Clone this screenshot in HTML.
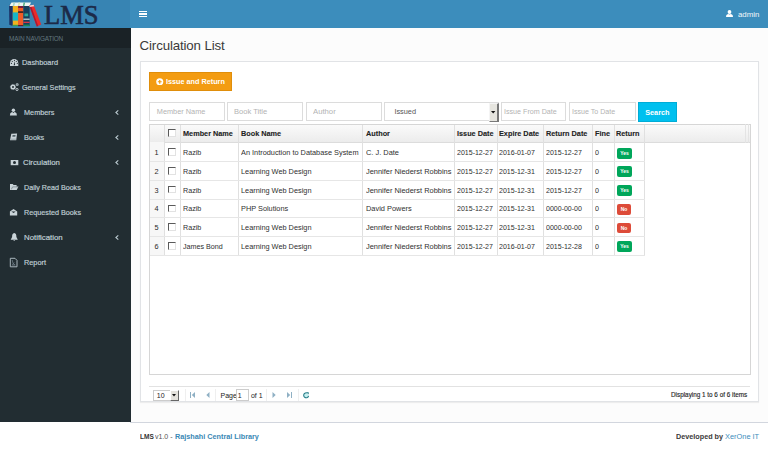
<!DOCTYPE html><html><head><meta charset="utf-8"><style>
*{margin:0;padding:0;box-sizing:border-box}
html,body{width:768px;height:451px;overflow:hidden;background:#fcfcfc;font-family:"Liberation Sans", sans-serif;}
.ab{position:absolute;white-space:nowrap}
.side{color:#bfccd2;font-size:7.3px;-webkit-text-stroke:0.2px #bfccd2}
.cell{position:absolute;white-space:nowrap;font-size:7.3px;color:#333;-webkit-text-stroke:0.15px #333}
.bt{font-size:7.95px;transform-origin:0 50%;-webkit-text-stroke:0;color:#2f2f2f}
.hd{font-weight:bold;color:#222}
.ph{color:#b3b3b3;font-size:7.35px}
</style></head><body>
<div class="ab" style="left:0;top:0;width:130.5px;height:28px;background:#3784b3"></div>
<div class="ab" style="left:130px;top:0;width:638px;height:28px;background:#3c8dbc"></div>
<svg class="ab" style="left:0;top:0" width="45" height="28" viewBox="0 0 45 28">
<polygon points="9.1,5 12.8,4 12.8,26 9.3,24.8" fill="#1b3468"/>
<rect x="12.8" y="6" width="5.3" height="20" fill="#f2b21e"/>
<rect x="12.8" y="12.4" width="5.3" height="8.2" fill="#17b6c6"/>
<rect x="12.8" y="24.8" width="5.3" height="1.4" fill="#3aa050"/>
<rect x="18.1" y="6" width="5.3" height="20" fill="#f25c26"/>
<rect x="18.1" y="6" width="5.3" height="2" fill="#7a1f40"/>
<rect x="18.1" y="11.2" width="5.3" height="1.8" fill="#4a2a20"/>
<rect x="18.1" y="25" width="5.3" height="1.2" fill="#5a1a30"/>
<rect x="23.4" y="6" width="6.2" height="20" fill="#163f5c"/>
<rect x="24.4" y="13.5" width="3.8" height="2.8" fill="#2ea896"/>
<rect x="23.4" y="18.6" width="6.2" height="1.2" fill="#d4dcdc"/>
<rect x="23.4" y="21.7" width="6.2" height="1.3" fill="#d83548"/>
<rect x="23.4" y="24.6" width="6.2" height="1.6" fill="#1a8a50"/>
<polygon points="9.3,6 11.5,2.4 31,2.4 29.5,6" fill="#eef6f2"/>
<polygon points="13.5,2.4 15.2,2.4 14.2,6 12.6,6" fill="#a8d8c8"/>
<polygon points="18.5,2.4 20.2,2.4 19.3,6 17.8,6" fill="#d8e8b8"/>
<polygon points="23.5,2.4 25.2,2.4 24.4,6 22.9,6" fill="#58b088"/>
<polygon points="29.2,5.6 33.6,4.8 41.2,24.4 36.8,26.6" fill="#ea2a2a"/>
<polygon points="29.2,5.6 30.8,5.3 38.2,26 36.8,26.6" fill="#a81a34"/>
<polygon points="29.2,5.6 33.6,4.8 34.2,6.2 29.8,7" fill="#f2d8d8"/>
</svg>
<div class="ab" style="left:44px;top:1px;font:26.5px/28px 'Liberation Serif',serif;color:#1c2a48;-webkit-text-stroke:0.6px #1c2a48">LMS</div>
<div class="ab" style="left:139px;top:11px;width:8px;height:1.4px;background:#fff"></div>
<div class="ab" style="left:139px;top:13.3px;width:8px;height:1.4px;background:#fff"></div>
<div class="ab" style="left:139px;top:15.6px;width:8px;height:1.4px;background:#fff"></div>
<svg class="ab" style="left:726px;top:10.4px" width="7" height="7" viewBox="0 0 7 7">
<circle cx="3.5" cy="2.0" r="1.9" fill="#fff"/><path d="M0,7 L0.3,5.3 Q0.8,4.0 2.2,3.9 L3.5,4.6 L4.8,3.9 Q6.2,4.0 6.7,5.3 L7,7Z" fill="#fff"/></svg>
<div class="ab" style="left:737.8px;top:10.3px;font-size:7.6px;line-height:10px;color:#f4f8fb;transform:scaleX(1.03);transform-origin:0 50%">admin</div>
<div class="ab" style="left:0;top:28px;width:130.5px;height:394px;background:#222d32"></div>
<div class="ab" style="left:0;top:28px;width:130.5px;height:20px;background:#1a2226"></div>
<div class="ab" style="left:9px;top:34.8px;font-size:6.45px;letter-spacing:-0.17px;line-height:8px;color:#62777f">MAIN NAVIGATION</div>
<div class="ab side" style="left:21.7px;top:57.699999999999996px;line-height:10px;font-size:7.8px;transform:scaleX(0.943);transform-origin:0 50%">Dashboard</div>
<div class="ab side" style="left:22.2px;top:82.7px;line-height:10px;font-size:7.8px;transform:scaleX(0.923);transform-origin:0 50%">General Settings</div>
<div class="ab side" style="left:23.7px;top:107.7px;line-height:10px;font-size:7.8px;transform:scaleX(0.935);transform-origin:0 50%">Members</div>
<svg class="ab" style="left:115px;top:109.8px" width="4" height="5" viewBox="0 0 4 5"><path d="M3.3,0.4 L0.9,2.5 L3.3,4.6" stroke="#b8c7ce" stroke-width="1.1" fill="none"/></svg>
<div class="ab side" style="left:23.7px;top:132.8px;line-height:10px;font-size:7.8px;transform:scaleX(0.932);transform-origin:0 50%">Books</div>
<svg class="ab" style="left:115px;top:134.9px" width="4" height="5" viewBox="0 0 4 5"><path d="M3.3,0.4 L0.9,2.5 L3.3,4.6" stroke="#b8c7ce" stroke-width="1.1" fill="none"/></svg>
<div class="ab side" style="left:23.2px;top:157.9px;line-height:10px;font-size:7.8px;transform:scaleX(1.001);transform-origin:0 50%">Circulation</div>
<svg class="ab" style="left:115px;top:160.0px" width="4" height="5" viewBox="0 0 4 5"><path d="M3.3,0.4 L0.9,2.5 L3.3,4.6" stroke="#b8c7ce" stroke-width="1.1" fill="none"/></svg>
<div class="ab side" style="left:23.7px;top:182.8px;line-height:10px;font-size:7.8px;transform:scaleX(0.916);transform-origin:0 50%">Daily Read Books</div>
<div class="ab side" style="left:23.7px;top:208.0px;line-height:10px;font-size:7.8px;transform:scaleX(0.927);transform-origin:0 50%">Requested Books</div>
<div class="ab side" style="left:23.7px;top:232.8px;line-height:10px;font-size:7.8px;transform:scaleX(1.003);transform-origin:0 50%">Notification</div>
<svg class="ab" style="left:115px;top:234.9px" width="4" height="5" viewBox="0 0 4 5"><path d="M3.3,0.4 L0.9,2.5 L3.3,4.6" stroke="#b8c7ce" stroke-width="1.1" fill="none"/></svg>
<div class="ab side" style="left:23.7px;top:258.0px;line-height:10px;font-size:7.8px;transform:scaleX(0.939);transform-origin:0 50%">Report</div>
<svg class="ab" style="left:0;top:0" width="130" height="451" viewBox="0 0 130 451">
<path d="M10,65.9 L10,63.2 A4.15,4.2 0 0 1 18.3,63.2 L18.3,65.9 Z" fill="#c9d3d8"/>
<circle cx="14.4" cy="60.4" r="0.55" fill="#222d32"/><circle cx="12.3" cy="61.5" r="0.55" fill="#222d32"/>
<circle cx="11.4" cy="63.4" r="0.55" fill="#222d32"/><circle cx="16.3" cy="61.5" r="0.55" fill="#222d32"/>
<circle cx="17.3" cy="63.4" r="0.55" fill="#222d32"/><path d="M14.9,61.2 L13.6,65.2 L15.0,65.2Z" fill="#222d32"/>
<circle cx="13" cy="87" r="1.75" fill="none" stroke="#c9d3d8" stroke-width="1.5"/>
<circle cx="13" cy="87" r="2.6" fill="none" stroke="#c9d3d8" stroke-width="0.6" stroke-dasharray="0.9 0.7"/>
<circle cx="17.2" cy="84.6" r="1.5" fill="#9aa7ad"/><circle cx="17.2" cy="84.6" r="0.5" fill="#6f7f86"/>
<circle cx="17.0" cy="89.5" r="1.1" fill="none" stroke="#c9d3d8" stroke-width="0.9"/>
<circle cx="13.4" cy="110.2" r="1.7" fill="#c9d3d8"/>
<path d="M9.9,115.4 L10.3,113.3 Q10.9,112.1 12.4,111.9 L13.4,113 L14.4,111.9 Q15.9,112.1 16.5,113.3 L16.9,115.4Z" fill="#c9d3d8"/>
<path d="M11.3,133.8 L17.1,133.6 L16.2,140.3 L10,140.3 Z" fill="#c9d3d8"/>
<path d="M12.6,135 L15.6,135 L15.3,136.8 L12.3,136.8Z" fill="#55646b"/>
<path d="M10.6,139.2 L16.3,139.2" stroke="#6d7b82" stroke-width="0.5"/>
<rect x="10.7" y="160" width="7.6" height="5.2" fill="#c9d3d8"/>
<ellipse cx="14.5" cy="162.6" rx="1.5" ry="1.5" fill="#222d32"/>
<path d="M10,184 L12.8,184 L13.5,184.9 L16.6,184.9 L16.6,186.4 L18.5,186.4 L16.7,190.1 L10,190.1Z" fill="#c9d3d8"/>
<path d="M11.3,189.4 L12.6,186.9 L18.0,186.9" stroke="#56656c" stroke-width="0.55" fill="none"/>
<path d="M9.9,211.5 L13.55,208.9 L17.2,211.5 L17.2,215.4 L9.9,215.4Z" fill="#c9d3d8"/>
<path d="M11.4,211.4 L13.55,213.1 L15.7,211.4Z" fill="#222d32"/>
<path d="M14.25,233.1 C12.5,233.4 12.1,235 12.1,237.1 L10.7,239.7 L17.8,239.7 L16.4,237.1 C16.4,235 16,233.4 14.25,233.1Z" fill="#c9d3d8"/>
<path d="M13.3,240 A1,1 0 0 0 15.2,240Z" fill="#c9d3d8"/>
<path d="M10.3,258.3 L15.0,258.3 L17.0,260.4 L17.0,266.8 L10.3,266.8Z" fill="none" stroke="#a9b6bc" stroke-width="1.0"/>
<path d="M12.2,260 L13,263.5 L15.2,265 L12.2,265.2 L14.2,262.4" fill="none" stroke="#8494a0" stroke-width="0.6"/>
</svg>
<div class="ab" style="left:139.6px;top:38px;font-size:13.3px;letter-spacing:-0.14px;line-height:16px;color:#3a3a3a">Circulation List</div>
<div class="ab" style="left:140px;top:61.2px;width:618.7px;height:340.8px;border:1px solid #e1e3e6;background:#fff;box-shadow:0 1px 1px rgba(0,0,0,.06)"></div>
<div class="ab" style="left:149.2px;top:72px;width:82.7px;height:18.6px;background:#f39c12;border:1px solid #e08e0b"></div>
<svg class="ab" style="left:156px;top:77.8px" width="7.5" height="7.5" viewBox="0 0 8 8"><circle cx="4" cy="4" r="3.8" fill="#fff"/><path d="M4,2 L4,6 M2,4 L6,4" stroke="#f39c12" stroke-width="1.3"/></svg>
<div class="ab" style="left:166px;top:77px;font-size:7.25px;font-weight:bold;line-height:10px;color:#fff">Issue and Return</div>
<div class="ab" style="left:149.3px;top:102.3px;width:75.79999999999998px;height:19px;border:1px solid #dcdcdc;background:#fff"></div>
<div class="ab ph" style="left:156.8px;top:107.4px;line-height:10px;transform:scaleX(1.0);transform-origin:0 50%">Member Name</div>
<div class="ab" style="left:227px;top:102.3px;width:76.30000000000001px;height:19px;border:1px solid #dcdcdc;background:#fff"></div>
<div class="ab ph" style="left:234.3px;top:107.4px;line-height:10px;transform:scaleX(1.03);transform-origin:0 50%">Book Title</div>
<div class="ab" style="left:305.5px;top:102.3px;width:76.30000000000001px;height:19px;border:1px solid #dcdcdc;background:#fff"></div>
<div class="ab ph" style="left:312.5px;top:107.4px;line-height:10px;transform:scaleX(1.05);transform-origin:0 50%">Author</div>
<div class="ab" style="left:500.5px;top:102.3px;width:65.39999999999998px;height:19px;border:1px solid #dcdcdc;background:#fff"></div>
<div class="ab ph" style="left:504.1px;top:107.4px;line-height:10px;transform:scaleX(0.972);transform-origin:0 50%">Issue From Date</div>
<div class="ab" style="left:568.6px;top:102.3px;width:67.39999999999998px;height:19px;border:1px solid #dcdcdc;background:#fff"></div>
<div class="ab ph" style="left:572.4px;top:107.4px;line-height:10px;transform:scaleX(0.964);transform-origin:0 50%">Issue To Date</div>
<div class="ab" style="left:384.3px;top:102.3px;width:114.6px;height:19px;border:1px solid #dcdcdc;background:#fff"></div>
<div class="ab" style="left:394.4px;top:107.4px;font-size:7.35px;line-height:10px;color:#555">Issued</div>
<div class="ab" style="left:489.2px;top:102.5px;width:9.7px;height:19px;background:#e6e5df;border-right:2px solid #787878;border-bottom:1.6px solid #787878;border-left:1px solid #f4f4f4;border-top:1px solid #f4f4f4"></div>
<svg class="ab" style="left:491.3px;top:110.8px" width="4.4" height="3" viewBox="0 0 4.4 3"><path d="M0,0 L4.4,0 L2.2,2.6Z" fill="#111"/></svg>
<div class="ab" style="left:638.2px;top:102.3px;width:38.7px;height:19.5px;background:#00c0ef;border:1px solid #00acd6"></div>
<div class="ab" style="left:645.2px;top:108px;font-size:7.3px;font-weight:bold;line-height:10px;color:#fff">Search</div>
<div class="ab" style="left:149.3px;top:123.5px;width:602.0px;height:251.0px;border:1px solid #d6d6d6;background:#fff"></div>
<div class="ab" style="left:150.3px;top:124.5px;width:600.0px;height:18.900000000000006px;background:linear-gradient(#fafafa,#ececec);border-bottom:1px solid #dcdcdc"></div>
<div class="ab" style="left:150.3px;top:142.4px;width:13.699999999999989px;height:112.5px;background:#f7f7f7"></div>
<div class="ab" style="left:745.2px;top:124.0px;width:0.7px;height:18.900000000000006px;background:#e4e4e4"></div>
<div class="ab" style="left:747.7px;top:124.0px;width:0.7px;height:18.900000000000006px;background:#e4e4e4"></div>
<div class="ab" style="left:164.0px;top:124.5px;width:1px;height:130.4px;background:#e0e0e0"></div>
<div class="ab" style="left:180.2px;top:124.5px;width:1px;height:130.4px;background:#e0e0e0"></div>
<div class="ab" style="left:238.3px;top:124.5px;width:1px;height:130.4px;background:#e0e0e0"></div>
<div class="ab" style="left:362.4px;top:124.5px;width:1px;height:130.4px;background:#e0e0e0"></div>
<div class="ab" style="left:453.8px;top:124.5px;width:1px;height:130.4px;background:#e0e0e0"></div>
<div class="ab" style="left:496.6px;top:124.5px;width:1px;height:130.4px;background:#e0e0e0"></div>
<div class="ab" style="left:543.3px;top:124.5px;width:1px;height:130.4px;background:#e0e0e0"></div>
<div class="ab" style="left:592.0px;top:124.5px;width:1px;height:130.4px;background:#e0e0e0"></div>
<div class="ab" style="left:614.3px;top:124.5px;width:1px;height:130.4px;background:#e0e0e0"></div>
<div class="ab" style="left:644.3px;top:124.5px;width:1px;height:130.4px;background:#e0e0e0"></div>
<div class="ab" style="left:150.3px;top:161.15px;width:494.99999999999994px;height:1px;background:#e6e6e6"></div>
<div class="ab" style="left:150.3px;top:179.9px;width:494.99999999999994px;height:1px;background:#e6e6e6"></div>
<div class="ab" style="left:150.3px;top:198.65px;width:494.99999999999994px;height:1px;background:#e6e6e6"></div>
<div class="ab" style="left:150.3px;top:217.4px;width:494.99999999999994px;height:1px;background:#e6e6e6"></div>
<div class="ab" style="left:150.3px;top:236.15px;width:494.99999999999994px;height:1px;background:#e6e6e6"></div>
<div class="ab" style="left:150.3px;top:254.9px;width:494.99999999999994px;height:1px;background:#e6e6e6"></div>
<div class="cell hd" style="left:183.0px;top:123.5px;line-height:19.900000000000006px;font-size:7.95px;transform:scaleX(0.92);transform-origin:0 50%;-webkit-text-stroke:0.1px #222">Member Name</div>
<div class="cell hd" style="left:240.8px;top:123.5px;line-height:19.900000000000006px;font-size:7.95px;transform:scaleX(0.92);transform-origin:0 50%;-webkit-text-stroke:0.1px #222">Book Name</div>
<div class="cell hd" style="left:365.6px;top:123.5px;line-height:19.900000000000006px;font-size:7.95px;transform:scaleX(0.92);transform-origin:0 50%;-webkit-text-stroke:0.1px #222">Author</div>
<div class="cell hd" style="left:456.6px;top:123.5px;line-height:19.900000000000006px;font-size:7.95px;transform:scaleX(0.92);transform-origin:0 50%;-webkit-text-stroke:0.1px #222">Issue Date</div>
<div class="cell hd" style="left:498.9px;top:123.5px;line-height:19.900000000000006px;font-size:7.95px;transform:scaleX(0.92);transform-origin:0 50%;-webkit-text-stroke:0.1px #222">Expire Date</div>
<div class="cell hd" style="left:546.0px;top:123.5px;line-height:19.900000000000006px;font-size:7.95px;transform:scaleX(0.92);transform-origin:0 50%;-webkit-text-stroke:0.1px #222">Return Date</div>
<div class="cell hd" style="left:594.7px;top:123.5px;line-height:19.900000000000006px;font-size:7.95px;transform:scaleX(0.92);transform-origin:0 50%;-webkit-text-stroke:0.1px #222">Fine</div>
<div class="cell hd" style="left:616.3px;top:123.5px;line-height:19.900000000000006px;font-size:7.95px;transform:scaleX(0.92);transform-origin:0 50%;-webkit-text-stroke:0.1px #222">Return</div>
<div class="ab" style="left:168px;top:129.45px;width:7.5px;height:7.5px;border:1.1px solid #5a5a5a;border-right-color:#e2e2e2;border-bottom-color:#e2e2e2;background:#fff"></div>
<div class="cell" style="left:149.3px;width:14.699999999999989px;text-align:center;top:144.1px;line-height:18.75px;-webkit-text-stroke:0;color:#2a2a2a">1</div>
<div class="ab" style="left:168px;top:148.275px;width:7.5px;height:7.5px;border:1.1px solid #5a5a5a;border-right-color:#e2e2e2;border-bottom-color:#e2e2e2;background:#fff"></div>
<div class="cell bt" style="left:183.0px;top:144.1px;line-height:18.75px;transform:scaleX(0.9)">Razib</div>
<div class="cell bt" style="left:240.8px;top:144.1px;line-height:18.75px;transform:scaleX(0.925)">An Introduction to Database System</div>
<div class="cell bt" style="left:365.6px;top:144.1px;line-height:18.75px;transform:scaleX(0.935)">C. J. Date</div>
<div class="cell bt" style="left:456.5px;top:144.1px;line-height:18.75px;transform:scaleX(0.885)">2015-12-27</div>
<div class="cell bt" style="left:499.2px;top:144.1px;line-height:18.75px;transform:scaleX(0.885)">2016-01-07</div>
<div class="cell bt" style="left:546.0px;top:144.1px;line-height:18.75px;transform:scaleX(0.885)">2015-12-27</div>
<div class="cell bt" style="left:595.0px;top:144.1px;line-height:18.75px;transform:scaleX(0.9)">0</div>
<div class="ab" style="left:616.6px;top:147.6px;width:15.8px;height:11px;background:#00a65a;border-radius:2px;color:#fff;font-size:5px;font-weight:bold;text-align:center;line-height:11px">Yes</div>
<div class="cell" style="left:149.3px;width:14.699999999999989px;text-align:center;top:162.85px;line-height:18.75px;-webkit-text-stroke:0;color:#2a2a2a">2</div>
<div class="ab" style="left:168px;top:167.025px;width:7.5px;height:7.5px;border:1.1px solid #5a5a5a;border-right-color:#e2e2e2;border-bottom-color:#e2e2e2;background:#fff"></div>
<div class="cell bt" style="left:183.0px;top:162.85px;line-height:18.75px;transform:scaleX(0.9)">Razib</div>
<div class="cell bt" style="left:240.8px;top:162.85px;line-height:18.75px;transform:scaleX(0.925)">Learning Web Design</div>
<div class="cell bt" style="left:365.6px;top:162.85px;line-height:18.75px;transform:scaleX(0.935)">Jennifer Niederst Robbins</div>
<div class="cell bt" style="left:456.5px;top:162.85px;line-height:18.75px;transform:scaleX(0.885)">2015-12-27</div>
<div class="cell bt" style="left:499.2px;top:162.85px;line-height:18.75px;transform:scaleX(0.885)">2015-12-31</div>
<div class="cell bt" style="left:546.0px;top:162.85px;line-height:18.75px;transform:scaleX(0.885)">2015-12-27</div>
<div class="cell bt" style="left:595.0px;top:162.85px;line-height:18.75px;transform:scaleX(0.9)">0</div>
<div class="ab" style="left:616.6px;top:166.35px;width:15.8px;height:11px;background:#00a65a;border-radius:2px;color:#fff;font-size:5px;font-weight:bold;text-align:center;line-height:11px">Yes</div>
<div class="cell" style="left:149.3px;width:14.699999999999989px;text-align:center;top:181.6px;line-height:18.75px;-webkit-text-stroke:0;color:#2a2a2a">3</div>
<div class="ab" style="left:168px;top:185.775px;width:7.5px;height:7.5px;border:1.1px solid #5a5a5a;border-right-color:#e2e2e2;border-bottom-color:#e2e2e2;background:#fff"></div>
<div class="cell bt" style="left:183.0px;top:181.6px;line-height:18.75px;transform:scaleX(0.9)">Razib</div>
<div class="cell bt" style="left:240.8px;top:181.6px;line-height:18.75px;transform:scaleX(0.925)">Learning Web Design</div>
<div class="cell bt" style="left:365.6px;top:181.6px;line-height:18.75px;transform:scaleX(0.935)">Jennifer Niederst Robbins</div>
<div class="cell bt" style="left:456.5px;top:181.6px;line-height:18.75px;transform:scaleX(0.885)">2015-12-27</div>
<div class="cell bt" style="left:499.2px;top:181.6px;line-height:18.75px;transform:scaleX(0.885)">2015-12-31</div>
<div class="cell bt" style="left:546.0px;top:181.6px;line-height:18.75px;transform:scaleX(0.885)">2015-12-27</div>
<div class="cell bt" style="left:595.0px;top:181.6px;line-height:18.75px;transform:scaleX(0.9)">0</div>
<div class="ab" style="left:616.6px;top:185.1px;width:15.8px;height:11px;background:#00a65a;border-radius:2px;color:#fff;font-size:5px;font-weight:bold;text-align:center;line-height:11px">Yes</div>
<div class="cell" style="left:149.3px;width:14.699999999999989px;text-align:center;top:200.35px;line-height:18.75px;-webkit-text-stroke:0;color:#2a2a2a">4</div>
<div class="ab" style="left:168px;top:204.525px;width:7.5px;height:7.5px;border:1.1px solid #5a5a5a;border-right-color:#e2e2e2;border-bottom-color:#e2e2e2;background:#fff"></div>
<div class="cell bt" style="left:183.0px;top:200.35px;line-height:18.75px;transform:scaleX(0.9)">Razib</div>
<div class="cell bt" style="left:240.8px;top:200.35px;line-height:18.75px;transform:scaleX(0.925)">PHP Solutions</div>
<div class="cell bt" style="left:365.6px;top:200.35px;line-height:18.75px;transform:scaleX(0.935)">David Powers</div>
<div class="cell bt" style="left:456.5px;top:200.35px;line-height:18.75px;transform:scaleX(0.885)">2015-12-27</div>
<div class="cell bt" style="left:499.2px;top:200.35px;line-height:18.75px;transform:scaleX(0.885)">2015-12-31</div>
<div class="cell bt" style="left:546.0px;top:200.35px;line-height:18.75px;transform:scaleX(0.885)">0000-00-00</div>
<div class="cell bt" style="left:595.0px;top:200.35px;line-height:18.75px;transform:scaleX(0.9)">0</div>
<div class="ab" style="left:617px;top:204.15px;width:14px;height:10.5px;background:#dd4b39;border-radius:2px;color:#fff;font-size:5px;font-weight:bold;text-align:center;line-height:10.5px">No</div>
<div class="cell" style="left:149.3px;width:14.699999999999989px;text-align:center;top:219.1px;line-height:18.75px;-webkit-text-stroke:0;color:#2a2a2a">5</div>
<div class="ab" style="left:168px;top:223.275px;width:7.5px;height:7.5px;border:1.1px solid #5a5a5a;border-right-color:#e2e2e2;border-bottom-color:#e2e2e2;background:#fff"></div>
<div class="cell bt" style="left:183.0px;top:219.1px;line-height:18.75px;transform:scaleX(0.9)">Razib</div>
<div class="cell bt" style="left:240.8px;top:219.1px;line-height:18.75px;transform:scaleX(0.925)">Learning Web Design</div>
<div class="cell bt" style="left:365.6px;top:219.1px;line-height:18.75px;transform:scaleX(0.935)">Jennifer Niederst Robbins</div>
<div class="cell bt" style="left:456.5px;top:219.1px;line-height:18.75px;transform:scaleX(0.885)">2015-12-27</div>
<div class="cell bt" style="left:499.2px;top:219.1px;line-height:18.75px;transform:scaleX(0.885)">2015-12-31</div>
<div class="cell bt" style="left:546.0px;top:219.1px;line-height:18.75px;transform:scaleX(0.885)">0000-00-00</div>
<div class="cell bt" style="left:595.0px;top:219.1px;line-height:18.75px;transform:scaleX(0.9)">0</div>
<div class="ab" style="left:617px;top:222.9px;width:14px;height:10.5px;background:#dd4b39;border-radius:2px;color:#fff;font-size:5px;font-weight:bold;text-align:center;line-height:10.5px">No</div>
<div class="cell" style="left:149.3px;width:14.699999999999989px;text-align:center;top:237.85px;line-height:18.75px;-webkit-text-stroke:0;color:#2a2a2a">6</div>
<div class="ab" style="left:168px;top:242.025px;width:7.5px;height:7.5px;border:1.1px solid #5a5a5a;border-right-color:#e2e2e2;border-bottom-color:#e2e2e2;background:#fff"></div>
<div class="cell bt" style="left:183.0px;top:237.85px;line-height:18.75px;transform:scaleX(0.9)">James Bond</div>
<div class="cell bt" style="left:240.8px;top:237.85px;line-height:18.75px;transform:scaleX(0.925)">Learning Web Design</div>
<div class="cell bt" style="left:365.6px;top:237.85px;line-height:18.75px;transform:scaleX(0.935)">Jennifer Niederst Robbins</div>
<div class="cell bt" style="left:456.5px;top:237.85px;line-height:18.75px;transform:scaleX(0.885)">2015-12-27</div>
<div class="cell bt" style="left:499.2px;top:237.85px;line-height:18.75px;transform:scaleX(0.885)">2016-01-07</div>
<div class="cell bt" style="left:546.0px;top:237.85px;line-height:18.75px;transform:scaleX(0.885)">2015-12-28</div>
<div class="cell bt" style="left:595.0px;top:237.85px;line-height:18.75px;transform:scaleX(0.9)">0</div>
<div class="ab" style="left:616.6px;top:241.35px;width:15.8px;height:11px;background:#00a65a;border-radius:2px;color:#fff;font-size:5px;font-weight:bold;text-align:center;line-height:11px">Yes</div>
<div class="ab" style="left:149.3px;top:386.4px;width:601.2px;height:1px;background:#e2e2e2"></div>
<div class="ab" style="left:152.5px;top:389.5px;width:26.3px;height:11.3px;border:1px solid #ccc;background:#fff"></div>
<div class="ab" style="left:156.8px;top:390.5px;font-size:7px;line-height:10px;color:#222">10</div>
<div class="ab" style="left:170.3px;top:390px;width:8.4px;height:10.6px;background:#e4e2dc;border-right:1.2px solid #666;border-bottom:1.2px solid #666;border-left:1px solid #fff;border-top:1px solid #fff"></div>
<svg class="ab" style="left:172.4px;top:394px" width="4" height="3" viewBox="0 0 4 3"><path d="M0,0 L4,0 L2,2.5Z" fill="#111"/></svg>
<div class="ab" style="left:184.5px;top:389px;width:1px;height:12px;background:#efefef"></div>
<div class="ab" style="left:214.8px;top:389px;width:1px;height:12px;background:#efefef"></div>
<div class="ab" style="left:265.5px;top:389px;width:1px;height:12px;background:#efefef"></div>
<div class="ab" style="left:297.8px;top:389px;width:1px;height:12px;background:#efefef"></div>
<svg class="ab" style="left:190px;top:391.5px" width="5" height="6" viewBox="0 0 5 6"><rect x="0" y="0" width="1" height="6" fill="#8fb0c4"/><path d="M5,0 L1.8,3 L5,6Z" fill="#8fb0c4"/></svg>
<svg class="ab" style="left:206px;top:391.5px" width="4" height="6" viewBox="0 0 4 6"><path d="M3.5,0 L0.3,3 L3.5,6Z" fill="#8fb0c4"/></svg>
<div class="ab" style="left:220.5px;top:390.5px;font-size:7px;line-height:10px;color:#222">Page</div>
<div class="ab" style="left:235.6px;top:389px;width:13.3px;height:11.8px;border:1px solid #ccc;background:#fff"></div>
<div class="ab" style="left:237.8px;top:390.5px;font-size:7px;line-height:10px;color:#222">1</div>
<div class="ab" style="left:250.9px;top:390.5px;font-size:7px;line-height:10px;color:#222">of 1</div>
<svg class="ab" style="left:272px;top:391.5px" width="4" height="6" viewBox="0 0 4 6"><path d="M0.5,0 L3.7,3 L0.5,6Z" fill="#8fb0c4"/></svg>
<svg class="ab" style="left:286.5px;top:391.5px" width="5" height="6" viewBox="0 0 5 6"><path d="M0,0 L3.2,3 L0,6Z" fill="#8fb0c4"/><rect x="4" y="0" width="1" height="6" fill="#8fb0c4"/></svg>
<svg class="ab" style="left:302px;top:390.5px" width="9" height="9" viewBox="0 0 9 9"><circle cx="4.2" cy="4.4" r="2.3" fill="#c6f0f0"/><path d="M6.6,4.9 A2.5,2.5 0 1 1 5.4,2.1" stroke="#2a7f8a" stroke-width="1.1" fill="none"/><path d="M4.6,1.0 L7.0,1.4 L6.4,3.6Z" fill="#2a7f8a"/></svg>
<div class="ab" style="left:671px;top:390.1px;-webkit-text-stroke:0.12px #222;font-size:6.35px;line-height:10px;color:#222">Displaying 1 to 6 of 6 items</div>
<div class="ab" style="left:0;top:422.3px;width:768px;height:29px;background:#fff"></div>
<div class="ab" style="left:130px;top:422.3px;width:638px;height:1px;background:#d2d6de"></div>
<div class="ab" style="left:139.8px;top:431.9px;font-size:7.9px;line-height:10px;transform:scaleX(0.827);transform-origin:0 50%;color:#333;font-weight:bold">LMS</div>
<div class="ab" style="left:155.4px;top:431.9px;font-size:7.9px;line-height:10px;transform:scaleX(0.890);transform-origin:0 50%;color:#555">v1.0 -</div>
<div class="ab" style="left:175.3px;top:431.9px;font-size:7.9px;line-height:10px;transform:scaleX(0.920);transform-origin:0 50%;color:#3a88b5;font-weight:bold">Rajshahi Central Library</div>
<div class="ab" style="left:676.2px;top:431.9px;font-size:7.9px;line-height:10px;transform:scaleX(0.917);transform-origin:0 50%;color:#3a3a3a;font-weight:bold">Developed by</div>
<div class="ab" style="left:725.0px;top:431.9px;font-size:7.9px;line-height:10px;transform:scaleX(0.938);transform-origin:0 50%;color:#3c8dbc">XerOne IT</div>
</body></html>
